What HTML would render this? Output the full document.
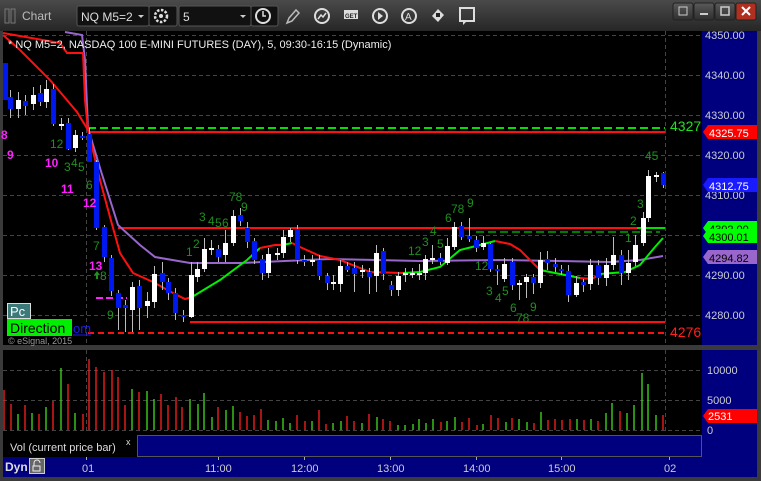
<!DOCTYPE html>
<html><head><meta charset="utf-8"><style>
html,body{margin:0;padding:0;background:#2b2b2b;}
body{width:761px;height:481px;overflow:hidden;position:relative;font-family:"Liberation Sans",sans-serif;}
svg{position:absolute;left:0;top:0;}
</style></head><body>
<svg width="761" height="481" viewBox="0 0 761 481" font-family="Liberation Sans, sans-serif">
<defs>
<linearGradient id="tb" x1="0" y1="0" x2="0" y2="1"><stop offset="0" stop-color="#4a4a4a"/><stop offset="1" stop-color="#262626"/></linearGradient>
<linearGradient id="bt" x1="0" y1="0" x2="0" y2="1"><stop offset="0" stop-color="#5a5a5a"/><stop offset="1" stop-color="#2e2e2e"/></linearGradient>
</defs>
<rect width="761" height="481" fill="#3a3a3a"/>
<rect width="761" height="31" fill="url(#tb)"/>
<rect x="5" y="9" width="4" height="14" fill="none" stroke="#777"/>
<rect x="11" y="9" width="4" height="14" fill="none" stroke="#777"/>
<text x="22" y="20" fill="#bbb" font-size="12">Chart</text>
<rect x="77" y="6" width="72" height="20" rx="2" fill="#111" stroke="#555"/>
<text x="81" y="21" fill="#ddd" font-size="12">NQ M5=2</text>
<path d="M138 15 l3 3 3-3z" fill="#ccc"/>
<rect x="149" y="6" width="28" height="20" rx="2" fill="#111" stroke="#555"/>
<circle cx="161" cy="16" r="6" fill="none" stroke="#ddd" stroke-width="2.5" stroke-dasharray="2.5 1.5"/><circle cx="161" cy="16" r="2" fill="#ddd"/>
<rect x="179" y="6" width="72" height="20" rx="2" fill="#111" stroke="#555"/>
<text x="183" y="21" fill="#ddd" font-size="12">5</text>
<path d="M240 15 l3 3 3-3z" fill="#ccc"/>
<rect x="251" y="6" width="27" height="20" rx="2" fill="#111" stroke="#555"/>
<circle cx="263" cy="16" r="7" fill="none" stroke="#ddd" stroke-width="2"/><path d="M263 11v5h3" stroke="#ddd" stroke-width="1.5" fill="none"/>
<path d="M287 23l2-5 7-8 3 3-7 8z" fill="none" stroke="#bbb" stroke-width="1.5"/>
<circle cx="322" cy="16" r="7" fill="none" stroke="#ddd" stroke-width="2"/><path d="M318 19l3-4 2 2 3-4" stroke="#ddd" fill="none" stroke-width="1.5"/>
<rect x="344" y="10" width="14" height="9" fill="#ddd"/><text x="345" y="18" font-size="6" fill="#222" font-weight="bold">GET</text>
<circle cx="380" cy="16" r="7" fill="none" stroke="#ddd" stroke-width="2"/><path d="M378 12v8l5-4z" fill="#ddd"/>
<circle cx="409" cy="16" r="7" fill="none" stroke="#ddd" stroke-width="2"/><text x="405" y="20" font-size="10" fill="#ddd">A</text>
<path d="M432 16l6-7 6 6-6 7z" fill="#ddd"/><rect x="436" y="13" width="4" height="4" fill="#222"/>
<rect x="460" y="8" width="14" height="13" fill="none" stroke="#ddd" stroke-width="2"/><path d="M463 21l0 4 4-4" fill="#ddd"/>
<rect x="673" y="3" width="20" height="17" rx="2" fill="url(#bt)" stroke="#222"/>
<rect x="694" y="3" width="20" height="17" rx="2" fill="url(#bt)" stroke="#222"/>
<rect x="715" y="3" width="20" height="17" rx="2" fill="url(#bt)" stroke="#222"/>
<rect x="736" y="3" width="20" height="17" rx="2" fill="#b03020" stroke="#222"/>
<rect x="679" y="7" width="8" height="8" fill="none" stroke="#ccc"/><rect x="700" y="13" width="8" height="2" fill="#ccc"/><rect x="721" y="7" width="8" height="8" fill="none" stroke="#ccc" stroke-width="1.5"/>
<path d="M742 7l8 8M750 7l-8 8" stroke="#fff" stroke-width="2"/>

<rect x="3" y="31" width="699" height="314" fill="#000"/>
<rect x="702" y="31" width="55" height="314" fill="#00007f"/>
<g stroke="#444" stroke-dasharray="4 3" stroke-width="1">
<path d="M3 35.5H702M3 75.5H702M3 115.5H702M3 155.5H702M3 195.5H702M3 235.5H702M3 275.5H702M3 315.5H702"/>
<path d="M86.5 31V345M665.5 31V345"/>
</g>
<g fill="#ccc" font-size="11">
<text x="705" y="39">4350.00</text><text x="705" y="79">4340.00</text><text x="705" y="119">4330.00</text><text x="705" y="159">4320.00</text><text x="705" y="199">4310.00</text><text x="705" y="239">4300.00</text><text x="705" y="279">4290.00</text><text x="705" y="319">4280.00</text>
</g>
<path d="M88 128H665" stroke="#00e000" stroke-width="2" stroke-dasharray="8 4"/>
<path d="M88 132H665" stroke="#ff1010" stroke-width="2"/>
<path d="M118 228H637" stroke="#ff1010" stroke-width="2"/>
<path d="M637 228H665" stroke="#00e000" stroke-width="2"/>
<path d="M476 232H660" stroke="#007a00" stroke-width="2" stroke-dasharray="8 4"/>
<path d="M190 322H665" stroke="#ff1010" stroke-width="2"/>
<path d="M88 333H665" stroke="#ff1010" stroke-width="2" stroke-dasharray="6 4"/>
<path d="M96 298H127" stroke="#ff20ff" stroke-width="2" stroke-dasharray="7 3"/>
<polyline fill="none" stroke="#9966cc" stroke-width="2" points="65,32 82,35 85,60 88,128 100,168 118,225 140,245 155,257 190,263 240,263 330,259 420,261 500,260 560,261 610,262 640,260 663,256"/>
<polyline fill="none" stroke="#ff1010" stroke-width="2" points="3,33 20,36 60,43 67,53 83,53 85,100 88,130"/>
<polyline fill="none" stroke="#ff1010" stroke-width="2" points="3,35 20,50 50,80 77,112 88,130 100,180 110,217 120,253 133,273 153,282 173,293 185,299 192,297"/>
<polyline fill="none" stroke="#00ee00" stroke-width="2" points="192,297 220,280 247,260 260,248"/>
<polyline fill="none" stroke="#ff1010" stroke-width="2" points="260,248 275,245 283,245"/>
<polyline fill="none" stroke="#00ee00" stroke-width="2" points="283,245 292,243"/>
<polyline fill="none" stroke="#ff1010" stroke-width="2" points="292,243 300,247 320,256 340,260 370,272 403,273"/>
<polyline fill="none" stroke="#00ee00" stroke-width="2" points="403,273 420,272 440,267 460,250 480,245 495,241"/>
<polyline fill="none" stroke="#ff1010" stroke-width="2" points="495,241 510,244 520,250 535,265 540,270"/>
<polyline fill="none" stroke="#00ee00" stroke-width="2" points="540,270 565,275 580,278"/>
<polyline fill="none" stroke="#ff1010" stroke-width="2" points="580,278 592,279 600,274"/>
<polyline fill="none" stroke="#00ee00" stroke-width="2" points="600,274 625,272 640,265 655,247 663,238"/>
<g stroke="#bbb" stroke-width="1">
<path d="M10.5 90V118M18.5 92V118M25.5 95V115M33.5 87V110M40.5 85V106M46.5 80V108M53.5 84V126M61.5 118V130M68.5 118V150M75.5 130V152M82.5 132V140M89.5 128V162M96.5 160V230M104.5 225V262M111.5 255V296M118.5 290V330M125.5 300V332M132.5 282V332M139.5 280V330M147.5 292V318M154.5 266V308M162.5 262V290M168.5 278V300M175.5 288V320M183.5 310V322M191.5 262V318M197.5 262V282M204.5 238V272M211.5 240V255M218.5 245V262M225.5 230V262M233.5 210V246M240.5 208V226M247.5 222V248M254.5 238V264M262.5 255V280M268.5 248V278M277.5 248V260M283.5 230V258M290.5 228V242M297.5 225V264M304.5 255V266M312.5 255V266M319.5 255V280M327.5 273V290M333.5 275V290M340.5 260V292M347.5 262V272M354.5 262V292M362.5 265V278M369.5 268V294M376.5 245V292M383.5 248V280M391.5 281V296M398.5 272V296M405.5 268V282M412.5 268V278M419.5 264V280M425.5 255V280M432.5 245V264M440.5 253V265M447.5 238V265M454.5 222V250M461.5 222V240M469.5 218V242M476.5 236V252M483.5 236V250M490.5 243V272M497.5 265V285M504.5 258V282M512.5 258V290M519.5 280V300M526.5 274V298M533.5 274V294M540.5 252V288M547.5 251V270M555.5 258V272M561.5 265V275M568.5 265V302M576.5 276V297M583.5 279V292M590.5 259V290M598.5 260V285M606.5 258V286M613.5 237V270M621.5 250V285M628.5 250V280M635.5 235V266M643.5 212V246M648.5 170V222M656.5 172V182M663.5 172V188"/>
</g>
<g fill="#0018f0">
<rect x="3" y="63" width="5" height="37"/><rect x="8" y="97" width="5" height="12"/><rect x="23" y="101" width="5" height="5"/><rect x="38" y="93" width="5" height="9"/><rect x="51" y="89" width="5" height="35"/><rect x="66" y="123" width="5" height="26"/><rect x="80" y="136" width="5" height="2"/><rect x="87" y="134" width="5" height="28"/><rect x="94" y="162" width="5" height="66"/><rect x="102" y="227" width="5" height="30"/><rect x="109" y="258" width="5" height="33"/><rect x="116" y="293" width="5" height="15"/><rect x="123" y="305" width="5" height="3"/><rect x="137" y="286" width="5" height="22"/><rect x="160" y="273" width="5" height="9"/><rect x="166" y="282" width="5" height="11"/><rect x="173" y="293" width="5" height="20"/><rect x="181" y="315" width="5" height="2"/><rect x="216" y="249" width="5" height="8"/><rect x="238" y="215" width="5" height="6"/><rect x="245" y="228" width="5" height="14"/><rect x="252" y="241" width="5" height="19"/><rect x="260" y="259" width="5" height="14"/><rect x="295" y="229" width="5" height="31"/><rect x="302" y="260" width="5" height="2"/><rect x="317" y="260" width="5" height="16"/><rect x="325" y="276" width="5" height="7"/><rect x="345" y="266" width="5" height="4"/><rect x="352" y="268" width="5" height="6"/><rect x="367" y="272" width="5" height="5"/><rect x="381" y="251" width="5" height="23"/><rect x="389" y="285" width="5" height="5"/><rect x="438" y="258" width="5" height="4"/><rect x="459" y="226" width="5" height="11"/><rect x="467" y="236" width="5" height="3"/><rect x="474" y="240" width="5" height="8"/><rect x="488" y="244" width="5" height="25"/><rect x="495" y="269" width="5" height="2"/><rect x="510" y="262" width="5" height="23"/><rect x="531" y="277" width="5" height="6"/><rect x="545" y="259" width="5" height="4"/><rect x="553" y="264" width="5" height="3"/><rect x="559" y="269" width="5" height="2"/><rect x="566" y="271" width="5" height="24"/><rect x="581" y="282" width="5" height="3"/><rect x="596" y="265" width="5" height="13"/><rect x="619" y="255" width="5" height="18"/><rect x="661" y="173" width="5" height="12"/>
</g>
<g fill="#fff">
<rect x="16" y="100" width="5" height="9"/><rect x="31" y="95" width="5" height="9"/><rect x="44" y="89" width="5" height="13"/><rect x="59" y="124" width="5" height="2"/><rect x="73" y="135" width="5" height="13"/><rect x="130" y="287" width="5" height="23"/><rect x="145" y="301" width="5" height="5"/><rect x="152" y="274" width="5" height="28"/><rect x="189" y="275" width="5" height="42"/><rect x="195" y="269" width="5" height="8"/><rect x="202" y="249" width="5" height="20"/><rect x="209" y="248" width="5" height="2"/><rect x="223" y="243" width="5" height="12"/><rect x="231" y="216" width="5" height="27"/><rect x="266" y="254" width="5" height="19"/><rect x="275" y="253" width="5" height="2"/><rect x="281" y="237" width="5" height="16"/><rect x="288" y="230" width="5" height="7"/><rect x="310" y="260" width="5" height="2"/><rect x="331" y="282" width="5" height="2"/><rect x="338" y="266" width="5" height="18"/><rect x="360" y="270" width="5" height="2"/><rect x="374" y="253" width="5" height="23"/><rect x="396" y="276" width="5" height="14"/><rect x="403" y="273" width="5" height="2"/><rect x="410" y="273" width="5" height="2"/><rect x="417" y="273" width="5" height="2"/><rect x="423" y="259" width="5" height="14"/><rect x="430" y="258" width="5" height="2"/><rect x="445" y="246" width="5" height="17"/><rect x="452" y="227" width="5" height="20"/><rect x="481" y="243" width="5" height="4"/><rect x="502" y="264" width="5" height="15"/><rect x="517" y="283" width="5" height="2"/><rect x="524" y="277" width="5" height="5"/><rect x="538" y="260" width="5" height="23"/><rect x="574" y="283" width="5" height="12"/><rect x="588" y="265" width="5" height="19"/><rect x="604" y="265" width="5" height="13"/><rect x="611" y="255" width="5" height="10"/><rect x="626" y="263" width="5" height="10"/><rect x="633" y="245" width="5" height="17"/><rect x="641" y="218" width="5" height="25"/><rect x="646" y="176" width="5" height="42"/><rect x="654" y="175" width="5" height="2"/>
</g>
<g fill="#ff20ff" font-size="12" font-weight="bold">
<text x="1" y="139">8</text><text x="7" y="159">9</text><text x="45" y="167">10</text><text x="61" y="193">11</text><text x="83" y="207">12</text><text x="89" y="270">13</text>
</g>
<g fill="#1f8f1f" font-size="12">
<text x="50" y="148">12</text><text x="64" y="171">3</text><text x="71" y="167">4</text><text x="78" y="171">5</text><text x="86" y="189">6</text><text x="93" y="250">7</text><text x="100" y="280">8</text><text x="107" y="319">9</text>
<text x="186" y="256">1</text><text x="193" y="248">2</text><text x="199" y="221">3</text><text x="208" y="225">4</text><text x="215" y="227">5</text><text x="222" y="227">6</text><text x="229" y="201">78</text><text x="241" y="211">9</text>
<text x="408" y="255">12</text><text x="422" y="246">3</text><text x="430" y="235">4</text><text x="437" y="248">5</text><text x="445" y="222">6</text><text x="451" y="213">78</text><text x="467" y="207">9</text>
<text x="475" y="270">12</text><text x="486" y="295">3</text><text x="495" y="302">4</text><text x="502" y="295">5</text><text x="510" y="312">6</text><text x="516" y="322">78</text><text x="530" y="311">9</text>
<text x="625" y="242">1</text><text x="630" y="225">2</text><text x="637" y="208">3</text><text x="645" y="160">45</text>
</g>
<path d="M97 271l-3 4h2v4h2v-4h2z" fill="#1f8f1f"/>
<text x="8" y="48" fill="#eee" font-size="11">* NQ M5=2, NASDAQ 100 E-MINI FUTURES (DAY), 5, 09:30-16:15 (Dynamic)</text>
<text x="670" y="131" fill="#20e020" font-size="14">4327</text>
<text x="670" y="337" fill="#ff2020" font-size="14">4276</text>
<path d="M703 132l5-7h49v14h-49z" fill="#ff0000"/><text x="709" y="137" fill="#fff" font-size="11">4325.75</text>
<path d="M703 185l5-7h49v14h-49z" fill="#1a1aff"/><text x="709" y="190" fill="#fff" font-size="11">4312.75</text>
<path d="M703 228l5-7h49v14h-49z" fill="#00ff00"/><text x="709" y="233" fill="#000" font-size="11">4302.00</text>
<path d="M703 236l5-7h49v14h-49z" fill="#00ff00"/><text x="709" y="241" fill="#000" font-size="11">4300.01</text>
<path d="M703 257l5-7h49v14h-49z" fill="#9966cc"/><text x="709" y="262" fill="#000" font-size="11">4294.82</text>
<rect x="7.5" y="303.5" width="23" height="15" fill="#3c7a7a" stroke="#ddd"/><text x="10" y="316" fill="#fff" font-size="13">Pc</text>
<rect x="7" y="319" width="65" height="17" fill="#00ee00"/><text x="10" y="333" fill="#000" font-size="14">Direction</text>
<text x="73" y="333" fill="#1a1aff" font-size="13">om</text><path d="M73 335H91" stroke="#1a1aff"/>
<text x="8" y="344" fill="#999" font-size="9">© eSignal, 2015</text>

<rect x="3" y="350" width="699" height="84" fill="#000"/>
<rect x="702" y="350" width="55" height="84" fill="#00007f"/>
<g stroke="#444" stroke-dasharray="4 3"><path d="M3 370.5H702M3 400.5H702M3 430.5H702M86.5 350V434M665.5 350V434"/></g>
<g fill="#ccc" font-size="11"><text x="707" y="374">10000</text><text x="707" y="404">5000</text><text x="707" y="434">0</text></g>
<path d="M703 416l5-7h49v14h-49z" fill="#ff0000"/><text x="708" y="420" fill="#fff" font-size="11">2531</text>
<g stroke-width="1.3">
<path stroke="#ff2020" d="M4 430V390M11 430V404M25 430V405M39 430V414M53 430V401M68 430V384M83 430V414M89 430V359M96 430V367M104 430V372M112 430V370M118 430V377M125 430V405M139 430V392M161 430V394M168 430V405M176 430V397M182 430V407M218 430V407M240 430V412M247 430V416M254 430V415M261 430V409M297 430V415M305 430V421M319 430V410M326 430V424M347 430V416M354 430V421M369 430V414M383 430V419M390 430V421M441 430V422M462 430V422M469 430V418M477 430V425M491 430V415M498 430V418M512 430V418M534 430V423M548 430V420M555 430V419M562 430V420M570 430V419M584 430V420M598 430V421M620 430V411M663 430V415"/>
<path stroke="#40dd20" d="M18 430V414M32 430V413M46 430V407M61 430V368M75 430V413M132 430V389M147 430V391M154 430V399M190 430V399M198 430V404M204 430V393M212 430V417M226 430V410M233 430V406M268 430V420M276 430V421M283 430V418M290 430V423M312 430V421M333 430V423M341 430V421M362 430V423M377 430V417M398 430V425M405 430V425M413 430V424M419 430V419M426 430V423M433 430V419M447 430V421M455 430V417M483 430V424M506 430V422M519 430V419M527 430V422M541 430V412M577 430V419M591 430V419M606 430V413M612 430V403M627 430V413M634 430V405M642 430V373M648 430V384M656 430V415"/>
</g>
<rect x="3" y="434" width="754" height="23" fill="#000"/>
<rect x="137.5" y="435.5" width="564" height="21" fill="#00007f" stroke="#555"/>
<rect x="702" y="434" width="55" height="23" fill="#00007f"/>
<text x="10" y="451" fill="#ddd" font-size="11">Vol (current price bar)</text>
<text x="126" y="445" fill="#ddd" font-size="9">x</text>
<rect x="3" y="457" width="754" height="20" fill="#00007f"/>
<path d="M86.5 457v3M218.5 457v3M304.5 457v3M390.5 457v3M476.5 457v3M561.5 457v3M669.5 457v3" stroke="#aaa"/>
<text x="5" y="471" fill="#ddd" font-size="12" font-weight="bold">Dyn</text>
<rect x="29.5" y="458.5" width="15" height="15" fill="#666" stroke="#ccc"/><path d="M34 466v-3a3 3 0 0 1 6 0M33 466h7v5h-7z" stroke="#eee" fill="none"/>
<g fill="#ccc" font-size="11"><text x="82" y="472">01</text><text x="205" y="472">11:00</text><text x="291" y="472">12:00</text><text x="377" y="472">13:00</text><text x="463" y="472">14:00</text><text x="548" y="472">15:00</text><text x="664" y="472">02</text></g>
</svg>
</body></html>
